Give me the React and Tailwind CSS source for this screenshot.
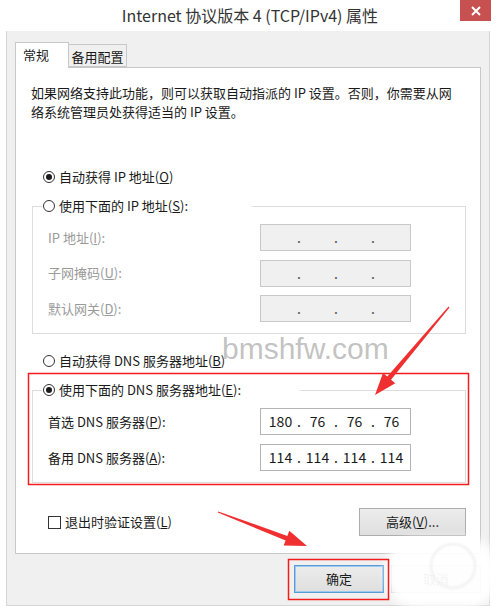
import React from "react";

const FONT = "font-['Noto_Sans_CJK_SC','Noto_Sans',sans-serif]";

function Radio({ checked, children, dim }) {
  return (
    <div className="flex items-center h-[20px]">
      <span className="flex items-center justify-center w-[12px] h-[12px] rounded-full border border-[#333] bg-white shrink-0">
        {checked && <span className="w-[6px] h-[6px] rounded-full bg-[#1a1a1a]" />}
      </span>
      <span className={`ml-[4px] text-[13px] leading-[20px] whitespace-nowrap ${dim ? "text-[#9a9a9a]" : "text-[#1a1a1a]"}`}>
        {children}
      </span>
    </div>
  );
}

function IpBox({ values, disabled }) {
  const segs = values || ["", "", "", ""];
  return (
    <div
      className={`w-[151px] h-[27px] flex items-center pl-[5px] border ${
        disabled ? "bg-[#f0f0f0] border-[#c9c9c9]" : "bg-white border-[#b4b4b4]"
      }`}
    >
      {segs.map((v, i) => (
        <React.Fragment key={i}>
          <span className="w-[29px] text-center text-[14px] leading-[27px] text-[#1a1a1a]">{v}</span>
          {i < 3 && (
            <span className={`w-[8px] text-center text-[14px] leading-[27px] ${disabled ? "text-[#555]" : "text-[#1a1a1a]"}`}>.</span>
          )}
        </React.Fragment>
      ))}
    </div>
  );
}

function FieldRow({ label, values, disabled }) {
  return (
    <div className="flex items-center h-[27px]">
      <span className={`w-[212px] text-[13px] whitespace-nowrap ${disabled ? "text-[#9a9a9a]" : "text-[#1a1a1a]"}`}>
        {label}
      </span>
      <IpBox values={values} disabled={disabled} />
    </div>
  );
}

function arrowPoints(tx, ty, hx, hy, headLen, headHalf, tailW, baseW) {
  const dx = hx - tx;
  const dy = hy - ty;
  const len = Math.hypot(dx, dy);
  const ux = dx / len;
  const uy = dy / len;
  const px = -uy;
  const py = ux;
  const bx = hx - ux * headLen;
  const by = hy - uy * headLen;
  const pts = [
    [tx + px * tailW, ty + py * tailW],
    [bx + px * baseW, by + py * baseW],
    [bx + px * headHalf, by + py * headHalf],
    [hx, hy],
    [bx - px * headHalf, by - py * headHalf],
    [bx - px * baseW, by - py * baseW],
    [tx - px * tailW, ty - py * tailW],
  ];
  return pts.map((p) => p.map((n) => n.toFixed(1)).join(",")).join(" ");
}

export default function App() {
  return (
    <div className={`relative w-[500px] h-[606px] bg-white overflow-hidden ${FONT}`}>
      {/* title bar */}
      <div className="grid grid-cols-[1fr_auto_1fr] h-[31px]">
        <div />
        <div className="text-[16px] leading-[31px] text-[#333] whitespace-nowrap">
          Internet 协议版本 4 (TCP/IPv4) 属性
        </div>
        <div className="flex justify-end items-start pr-[9px]">
          <div className="w-[31px] h-[21px] bg-[#c75050] flex items-center justify-center">
            <svg width="10" height="10" viewBox="0 0 10 10">
              <path d="M1 1 L9 9 M9 1 L1 9" stroke="#fff" strokeWidth="2" />
            </svg>
          </div>
        </div>
      </div>

      {/* client area */}
      <div className="ml-[6px] w-[484px] h-[575px] bg-[#f0f0f0] border-x border-b border-[#d6d6d6] pl-[8px] pt-[11px]">
        {/* tabs */}
        <div className="flex items-end h-[25px]">
          <div className="relative z-10 w-[54px] h-[26px] -mb-px bg-white border border-b-0 border-[#c8c8c8] pl-[7px] text-[13px] leading-[24px] text-[#1a1a1a]">
            常规
          </div>
          <div className="w-[58px] h-[23px] bg-[#f0f0f0] border border-l-0 border-[#c8c8c8] text-center text-[13px] leading-[23px] text-[#1a1a1a]">
            备用配置
          </div>
        </div>

        {/* tab page */}
        <div className="w-[466px] h-[487px] bg-white border border-[#c8c8c8] pl-[16px] pr-[14px]">
          <p className="mt-[15px] -ml-px text-[13px] leading-[19px] text-[#1a1a1a] whitespace-nowrap">
            如果网络支持此功能，则可以获取自动指派的 IP 设置。否则，你需要从网
            <br />
            络系统管理员处获得适当的 IP 设置。
          </p>

          <div className="mt-[46px] ml-[11px]">
            <Radio checked>
              自动获得 IP 地址(<u>O</u>)
            </Radio>
          </div>

          {/* static address group */}
          <div className="mt-[19px] border border-[#dcdcdc] pb-[11px]">
            <div className="-mt-[11px] ml-[9px] w-[210px] pl-[1px] bg-white">
              <Radio>
                使用下面的 IP 地址(<u>S</u>):
              </Radio>
            </div>
            <div className="mt-[8px] pl-[15px] flex flex-col gap-[8.5px]">
              <FieldRow disabled label={<>IP 地址(<u>I</u>):</>} />
              <FieldRow disabled label={<>子网掩码(<u>U</u>):</>} />
              <FieldRow disabled label={<>默认网关(<u>D</u>):</>} />
            </div>
          </div>

          <div className="mt-[17px] ml-[11px]">
            <Radio>
              自动获得 DNS 服务器地址(<u>B</u>)
            </Radio>
          </div>

          {/* dns group */}
          <div className="mt-[19px] border border-[#dcdcdc] pb-[11px]">
            <div className="-mt-[11px] ml-[9px] w-[258px] pl-[1px] bg-white">
              <Radio checked>
                使用下面的 DNS 服务器地址(<u>E</u>):
              </Radio>
            </div>
            <div className="mt-[8px] pl-[15px] flex flex-col gap-[9px]">
              <FieldRow label={<>首选 DNS 服务器(<u>P</u>):</>} values={["180", "76", "76", "76"]} />
              <FieldRow label={<>备用 DNS 服务器(<u>A</u>):</>} values={["114", "114", "114", "114"]} />
            </div>
          </div>

          <div className="mt-[25px] flex items-center justify-between h-[28px]">
            <div className="flex items-center pl-[16px]">
              <span className="w-[13px] h-[13px] border border-[#333] bg-white" />
              <span className="ml-[4px] text-[13px] text-[#1a1a1a]">
                退出时验证设置(<u>L</u>)
              </span>
            </div>
            <button className="w-[107px] h-[28px] bg-gradient-to-b from-[#ececec] to-[#dfdfdf] border border-[#adadad] text-[13px] text-[#1a1a1a]">
              高级(<u>V</u>)...
            </button>
          </div>
        </div>

        {/* dialog buttons */}
        <div className="mt-[11px] flex gap-[7px] pl-[279px]">
          <button className="w-[90px] h-[28px] bg-gradient-to-b from-[#ececec] to-[#dfdfdf] border border-[#5b9bd5] shadow-[inset_0_0_0_1px_#9ec8ee] text-[13px] text-[#1a1a1a]">
            确定
          </button>
          <button className="w-[90px] h-[28px] bg-gradient-to-b from-[#ececec] to-[#dfdfdf] border border-[#adadad] text-[13px] text-[#1a1a1a]">
            取消
          </button>
        </div>
      </div>

      {/* site watermark */}
      <div className="absolute left-[222px] top-[334px] font-['Liberation_Sans',sans-serif] text-[30px] leading-none text-[#a8a8a8]/70 pointer-events-none">
        bmshfw.com
      </div>

      {/* faded logo stamp in the corner */}
      <div className="absolute left-[386px] top-[538px] w-[112px] h-[70px] rounded-[30px] bg-white/95 blur-[4px] pointer-events-none" />
      <div className="absolute left-[430px] top-[543px] w-[46px] h-[46px] rounded-full border-2 border-[#efefef] blur-[1px] pointer-events-none" />

      {/* red annotations */}
      <svg className="absolute inset-0 pointer-events-none" width="500" height="606" viewBox="0 0 500 606">
        <rect x="28.5" y="373.5" width="440" height="111" fill="none" stroke="#f21c1c" strokeWidth="1.5" />
        <rect x="288.5" y="559.5" width="100" height="40" fill="none" stroke="#f21c1c" strokeWidth="1.5" />
        <polygon points={arrowPoints(449, 307, 375, 395, 22, 8, 0.6, 2.4)} fill="#f03030" />
        <polygon points={arrowPoints(218, 512, 307, 546, 22, 8, 0.6, 2.4)} fill="#f03030" />
      </svg>
    </div>
  );
}
